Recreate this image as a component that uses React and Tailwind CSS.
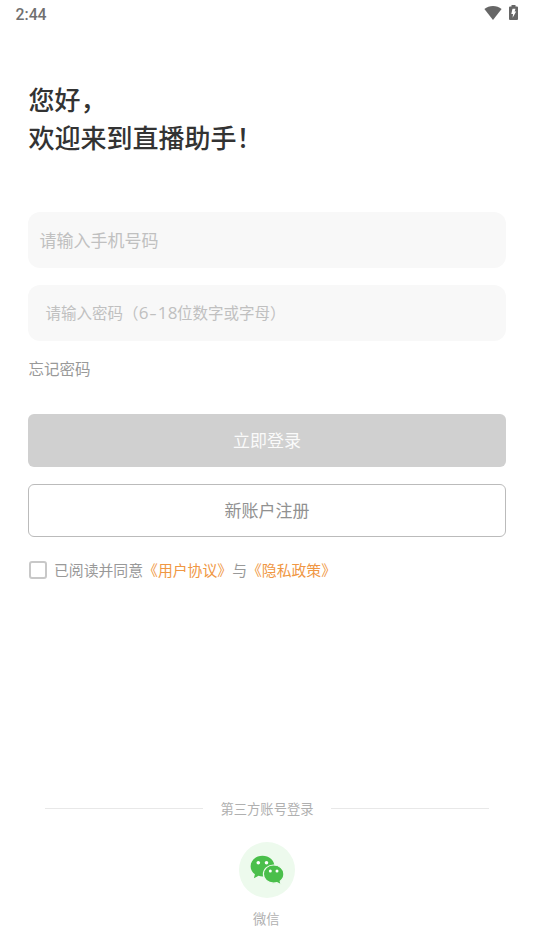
import React, { useState } from 'react';

const WechatIcon = () => (
    <svg className="w-[34px] h-[30px]" viewBox="0 0 34 30">
        <path fill="#4abf4b" d="M12.500 .8C5.900 .8 .6 5.400 .6 11.200c0 3.300 1.700 6.100 4.300 8l-1 4 4.600-2.400c1.300.4 2.600.6 4 .6 6.600 0 11.900-4.500 11.900-10.200S19.100 .8 12.500 .8z" />
        <path fill="#4abf4b" stroke="#edfaed" strokeWidth="1.200" d="M23.600 10c-5.700 0-10.200 4-10.200 9.100s4.500 9.100 10.200 9.100c1.200 0 2.300-.2 3.400-.5l4.200 2-1-3.400c2.300-1.700 3.700-4.200 3.700-7.200 0-5.100-4.600-9.100-10.300-9.100z" />
        <g fill="#fff">
            <circle cx="8.300" cy="7.700" r="1.800" />
            <circle cx="16.500" cy="7.700" r="1.800" />
            <circle cx="20.300" cy="16" r="1.500" />
            <circle cx="27" cy="16" r="1.500" />
        </g>
    </svg>
);

const StatusBar = () => (
    <div className="h-7 pl-[15.5px] pr-4 flex items-center justify-between text-[#666]">
        <span className="font-['Roboto',sans-serif] font-medium text-[15.8px] leading-7 text-[#707070] pt-px">2:44</span>
        <div className="flex items-center gap-[7px] -mt-[3px]">
            <svg className="w-[18px] h-[14px]" viewBox="0 0 18 14" fill="currentColor">
                <path d="M9 14L.4 3.100C2.800 1.100 5.800 0 9 0s6.200 1.100 8.600 3.100L9 14z" />
            </svg>
            <svg className="w-[9px] h-[15px]" viewBox="0 0 9 15">
                <path fill="currentColor" d="M2.500 0h4v1.500H8a1 1 0 0 1 1 1V14a1 1 0 0 1-1 1H1a1 1 0 0 1-1-1V2.500a1 1 0 0 1 1-1h1.500z" />
                <path fill="#fff" d="M3.500 3.700h3L5.600 6.500h1.600L3.600 12.700 4 9H2.300z" />
            </svg>
        </div>
    </div>
);

const App = () => {
    const [agreed, setAgreed] = useState(false);

    return (
        <div className="bg-white font-['Noto_Sans_CJK_SC',sans-serif] w-full h-screen flex flex-col overflow-hidden">
            <StatusBar />

            <main className="flex-1 px-7 flex flex-col">
                <h1 className="mt-[52px] pl-[0.5px] text-[26px] leading-[38px] font-medium text-[#333]">
                    您好，<br />欢迎来到直播助手！
                </h1>

                {/* Login form */}
                <div className="mt-14 h-14 rounded-xl bg-[#f8f8f8] px-[11.5px] flex items-center text-[17px] text-[#c0c0c0]">
                    请输入手机号码
                </div>
                <div className="mt-[17px] h-14 rounded-xl bg-[#f8f8f8] px-[17.5px] flex items-center text-[15.5px] text-[#c0c0c0]">
                    <span>请输入密码（</span>
                    <span className="font-['Open_Sans',sans-serif] flex text-center pt-px">
                        <span className="w-[9.5px] scale-x-110">6</span>
                        <span className="w-[10px] scale-x-150">-</span>
                        <span className="w-[9.5px] scale-x-110">1</span>
                        <span className="w-[9.5px] scale-x-110">8</span>
                    </span>
                    <span>位数字或字母）</span>
                </div>
                <a className="mt-[15px] pl-[0.5px] text-[15.5px] leading-6 text-[#999]">忘记密码</a>

                <button className="mt-[33.5px] h-[53.5px] shrink-0 rounded-md bg-[#d0d0d0] pb-px text-[17px] text-[#fafafa]">立即登录</button>
                <button className="mt-[17px] h-[53px] shrink-0 rounded-md border border-[#bbb] pb-px text-[17px] text-[#919191]">新账户注册</button>

                {/* Agreement */}
                <div className="mt-[21px] pl-px flex items-center text-[14.85px] leading-6 text-[#999]">
                    <button
                        onClick={() => setAgreed(!agreed)}
                        className={`w-[18px] h-[18px] mr-[7px] rounded-[3px] border-2 border-[#c8c8c8] ${agreed ? 'bg-[#f09743]' : 'bg-white'}`}
                    />
                    <span>已阅读并同意</span>
                    <a className="text-[#f09743]">《用户协议》</a>
                    <span>与</span>
                    <a className="text-[#f09743]">《隐私政策》</a>
                </div>
            </main>

            {/* Third-party login */}
            <footer className="h-[152px] px-[45px] flex flex-col items-center text-[13.3px] leading-5 text-[#b0b0b0]">
                <div className="w-full flex items-center gap-[17px]">
                    <div className="flex-1 h-px bg-[#e8e8e8]" />
                    <span className="pt-px -mb-px">第三方账号登录</span>
                    <div className="flex-1 h-px bg-[#e8e8e8]" />
                </div>
                <button className="mt-[23.5px] w-14 h-14 shrink-0 rounded-full bg-[#edfaed] flex items-center justify-center">
                    <WechatIcon />
                </button>
                <span className="mt-[11.5px] pr-[1.5px]">微信</span>
            </footer>
        </div>
    );
};

export default App;
